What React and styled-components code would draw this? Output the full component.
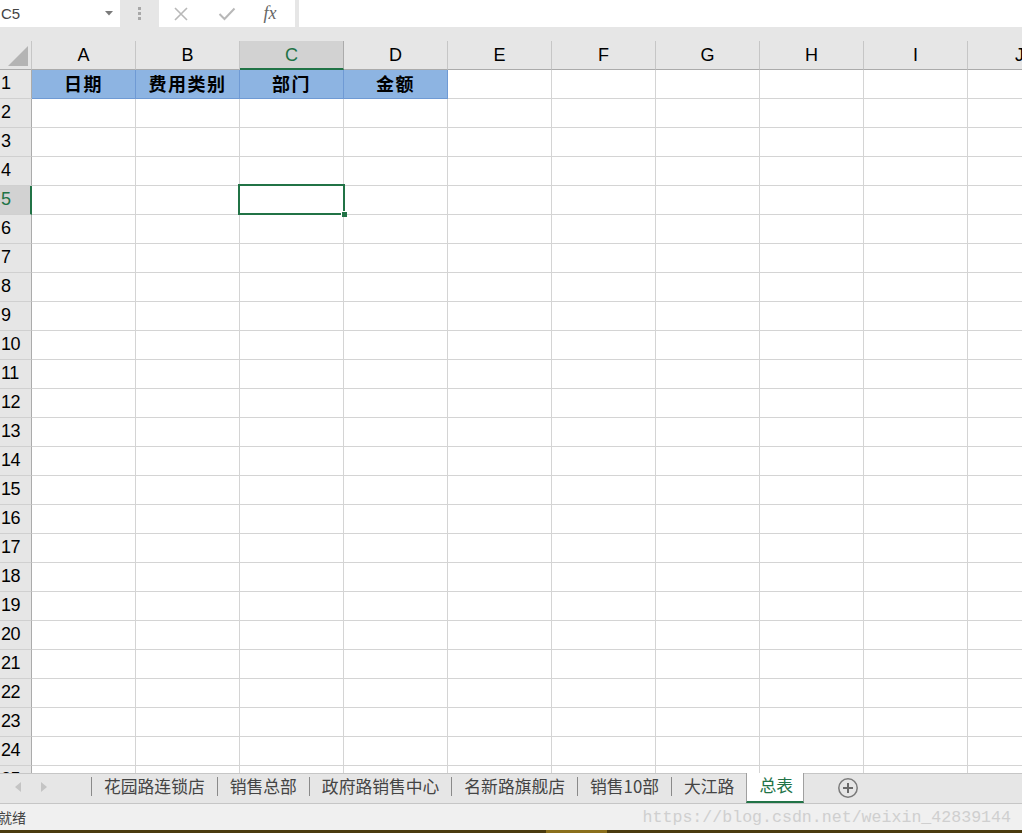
import React from "react";
import styled, { createGlobalStyle } from "styled-components";

const GlobalStyle = createGlobalStyle`
  html, body {
    margin: 0;
    padding: 0;
  }
  body {
    width: 1022px;
    height: 833px;
    overflow: hidden;
    background: #e6e6e6;
    font-family: "Liberation Sans", "Noto Sans CJK SC", sans-serif;
  }
`;

const Window = styled.div`
  display: flex;
  flex-direction: column;
  width: 1022px;
  height: 833px;
  background: #e6e6e6;
  overflow: hidden;
`;

/* ---------- formula bar ---------- */

const FormulaBar = styled.div`
  display: flex;
  height: 28px;
  flex-shrink: 0;
`;

const NameBox = styled.div`
  width: 120px;
  height: 27px;
  background: #fff;
  display: flex;
  align-items: center;
  justify-content: space-between;
  padding: 0 7px 0 1px;
  box-sizing: border-box;
  font-size: 15px;
  color: #444;
`;

const Grip = styled.div`
  width: 39px;
  display: flex;
  flex-direction: column;
  align-items: center;
  justify-content: center;
  gap: 2px;
  padding-bottom: 2px;

  span {
    width: 3px;
    height: 3px;
    background: #a8a8a8;
  }
`;

const ButtonBox = styled.div`
  width: 136px;
  height: 27px;
  background: #fff;
  display: flex;
  align-items: center;
  padding-left: 12px;
  box-sizing: border-box;
`;

const FxButton = styled.div`
  width: ${(p) => p.$w}px;
  display: flex;
  justify-content: center;
  align-items: center;
  font-family: "Liberation Serif", serif;
  font-style: italic;
  font-size: 18px;
  color: #666;
`;

const FormulaInput = styled.div`
  flex: 1;
  margin-left: 4px;
  height: 27px;
  background: #fff;
`;

const Spacer = styled.div`
  height: 13px;
  flex-shrink: 0;
`;

/* ---------- grid ---------- */

const Grid = styled.div`
  height: 732px;
  flex-shrink: 0;
  overflow: hidden;
  background: #fff;
`;

const Row = styled.div`
  display: flex;
  height: 29px;
  flex-shrink: 0;
`;

const Corner = styled.div`
  width: 32px;
  height: 29px;
  flex-shrink: 0;
  box-sizing: border-box;
  background: #e6e6e6;
  border-right: 1px solid #c6c6c6;
  border-bottom: 1px solid #ababab;
  position: relative;

  &::after {
    content: "";
    position: absolute;
    right: 3px;
    bottom: 3px;
    border-style: solid;
    border-width: 0 0 20px 20px;
    border-color: transparent transparent #b4b4b4 transparent;
  }
`;

const ColHead = styled.div`
  width: 104px;
  height: 29px;
  flex-shrink: 0;
  box-sizing: border-box;
  background: ${(p) => (p.$active ? "#d2d2d2" : "#e6e6e6")};
  border-right: 1px solid ${(p) => (p.$active ? "#ababab" : "#c6c6c6")};
  border-bottom: ${(p) => (p.$active ? "2px solid #217346" : "1px solid #ababab")};
  color: ${(p) => (p.$active ? "#217346" : "#000")};
  font-size: 18px;
  display: flex;
  align-items: center;
  justify-content: center;
  padding-top: ${(p) => (p.$active ? "1px" : "0")};
`;

const RowHead = styled.div`
  width: 32px;
  height: 29px;
  flex-shrink: 0;
  box-sizing: border-box;
  background: ${(p) => (p.$active ? "#d2d2d2" : "#e6e6e6")};
  border-right: ${(p) => (p.$active ? "2px solid #217346" : "1px solid #ababab")};
  border-bottom: 1px solid #d0d0d0;
  color: ${(p) => (p.$active ? "#217346" : "#000")};
  font-size: 18px;
  display: flex;
  align-items: center;
  padding: 0 0 2px 1px;
  letter-spacing: -0.5px;
`;

const Cell = styled.div`
  width: 104px;
  height: 29px;
  flex-shrink: 0;
  box-sizing: border-box;
  border-right: 1px solid ${(p) => (p.$head ? "#6f9ad4" : "#d4d4d4")};
  border-bottom: 1px solid ${(p) => (p.$head ? "#6f9ad4" : "#d4d4d4")};
  background: ${(p) => (p.$head ? "#8db4e2" : "#fff")};
  display: flex;
  align-items: center;
  justify-content: center;
  padding-bottom: 3px;
  font-family: "Noto Sans CJK SC", sans-serif;
  font-weight: 700;
  font-size: 18px;
  letter-spacing: 1.5px;
  color: #000;
  position: relative;
`;

const Selection = styled.div`
  position: absolute;
  z-index: 2;
  left: -2px;
  top: -2px;
  right: -2px;
  bottom: -1px;
  border: 2px solid #217346;
  box-sizing: border-box;
  pointer-events: none;

  &::after {
    content: "";
    position: absolute;
    right: -4px;
    bottom: -4px;
    width: 5px;
    height: 5px;
    background: #217346;
    border: 1px solid #fff;
    border-width: 1px 0 0 1px;
  }
`;

/* ---------- sheet tabs ---------- */

const TabBar = styled.div`
  height: 30px;
  flex-shrink: 0;
  box-sizing: border-box;
  border-top: 1px solid #c6c6c6;
  background: #e6e6e6;
  display: flex;
  align-items: stretch;
`;

const NavArrows = styled.div`
  width: 91px;
  display: flex;
  align-items: center;
  padding: 0 0 3px 15px;
  gap: 20px;
  box-sizing: border-box;
`;

const Arrow = styled.span`
  width: 0;
  height: 0;
  border-top: 5px solid transparent;
  border-bottom: 5px solid transparent;
  ${(p) =>
    p.$dir === "left"
      ? "border-right: 6px solid #c4c4c4;"
      : "border-left: 6px solid #c4c4c4;"}
`;

const Sep = styled.span`
  width: 1px;
  height: 19px;
  align-self: center;
  margin-top: -4px;
  background: #8a8a8a;
`;

const Tab = styled.div`
  padding: 0 ${(p) => (p.$active ? "10px" : "12px")} 0 12px;
  display: flex;
  align-items: center;
  font-family: "Noto Sans CJK SC", sans-serif;
  font-size: 16.8px;
  color: ${(p) => (p.$active ? "#217346" : "#444")};
  background: ${(p) => (p.$active ? "#fff" : "transparent")};
  box-sizing: border-box;
  margin-top: ${(p) => (p.$active ? "-1px" : "0")};
  border-left: ${(p) => (p.$active ? "1px solid #a0a0a0" : "none")};
  border-right: ${(p) => (p.$active ? "1px solid #a0a0a0" : "none")};
  border-bottom: ${(p) => (p.$active ? "2px solid #217346" : "none")};
  padding-bottom: ${(p) => (p.$active ? "4px" : "6px")};
  white-space: nowrap;
`;

const AddSheet = styled.div`
  margin-left: 33px;
  display: flex;
  align-items: center;
  padding-bottom: 2px;
`;

/* ---------- status bar ---------- */

const StatusBar = styled.div`
  height: 27px;
  flex-shrink: 0;
  box-sizing: border-box;
  border-top: 1px solid #c6c6c6;
  background: #f0f0f0;
  display: flex;
  align-items: center;
  justify-content: space-between;
  padding: 0 11px 0 0;
  font-family: "Noto Sans CJK SC", sans-serif;
  font-size: 14px;
  color: #444;
`;

const Ready = styled.span`
  margin-left: -2px;
`;

const Watermark = styled.span`
  font-family: "Liberation Mono", monospace;
  font-size: 16.6px;
  color: #cfcfcf;
`;

const Strip = styled.div`
  height: 3px;
  flex-shrink: 0;
  background: linear-gradient(
    to right,
    #4a3b0e 0,
    #4a3b0e 546px,
    #8a6f1b 546px,
    #8a6f1b 607px,
    #4a3b0e 607px
  );
`;

const columns = ["A", "B", "C", "D", "E", "F", "G", "H", "I", "J"];
const headers = ["日期", "费用类别", "部门", "金额"];
const tabs = ["花园路连锁店", "销售总部", "政府路销售中心", "名新路旗舰店", "销售10部", "大江路"];

function CloseIcon() {
  return (
    <svg width="16" height="16" viewBox="0 0 16 16">
      <path d="M2 2 L14 14 M14 2 L2 14" stroke="#b8b8b8" strokeWidth="1.6" fill="none" />
    </svg>
  );
}

function CheckIcon() {
  return (
    <svg width="18" height="16" viewBox="0 0 18 16">
      <path d="M1.5 8 L6.5 13 L16.5 2.5" stroke="#b8b8b8" strokeWidth="2" fill="none" />
    </svg>
  );
}

function PlusCircle() {
  return (
    <svg width="22" height="22" viewBox="0 0 22 22">
      <circle cx="11" cy="11" r="9.2" stroke="#7a7a7a" strokeWidth="1.5" fill="none" />
      <path d="M6 11 H16 M11 6 V16" stroke="#6a6a6a" strokeWidth="2" />
    </svg>
  );
}

export default function App() {
  const rows = Array.from({ length: 25 }, (_, i) => i + 1);

  return (
    <Window>
      <GlobalStyle />

      <FormulaBar>
        <NameBox>
          <span>C5</span>
          <svg width="8" height="5" viewBox="0 0 8 5">
            <path d="M0 0 H8 L4 4.5 Z" fill="#7a7a7a" />
          </svg>
        </NameBox>
        <Grip>
          <span />
          <span />
          <span />
        </Grip>
        <ButtonBox>
          <FxButton $w={20}>
            <CloseIcon />
          </FxButton>
          <FxButton $w={72}>
            <CheckIcon />
          </FxButton>
          <FxButton $w={14}>fx</FxButton>
        </ButtonBox>
        <FormulaInput />
      </FormulaBar>

      <Spacer />

      <Grid>
        <Row>
          <Corner />
          {columns.map((c) => (
            <ColHead key={c} $active={c === "C"}>
              {c}
            </ColHead>
          ))}
        </Row>
        {rows.map((r) => (
          <Row key={r}>
            <RowHead $active={r === 5}>{r}</RowHead>
            {columns.map((c, ci) => (
              <Cell key={c} $head={r === 1 && ci < 4}>
                {r === 1 && ci < 4 ? headers[ci] : null}
                {r === 5 && c === "C" ? <Selection /> : null}
              </Cell>
            ))}
          </Row>
        ))}
      </Grid>

      <TabBar>
        <NavArrows>
          <Arrow $dir="left" />
          <Arrow $dir="right" />
        </NavArrows>
        {tabs.map((t) => (
          <React.Fragment key={t}>
            <Sep />
            <Tab>{t}</Tab>
          </React.Fragment>
        ))}
        <Tab $active>总表</Tab>
        <AddSheet>
          <PlusCircle />
        </AddSheet>
      </TabBar>

      <StatusBar>
        <Ready>就绪</Ready>
        <Watermark>https://blog.csdn.net/weixin_42839144</Watermark>
      </StatusBar>

      <Strip />
    </Window>
  );
}
